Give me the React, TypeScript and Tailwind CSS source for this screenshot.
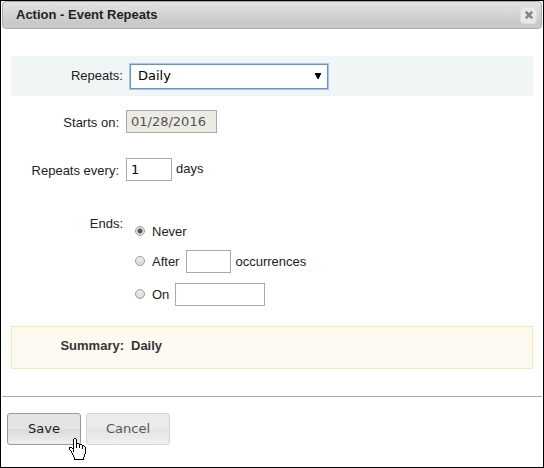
import React, { useState } from "react";

const HAND = [
  "     ##          ",
  "    #..#         ",
  "    #..#         ",
  "    #..#         ",
  "    #..#         ",
  "    #..###       ",
  "    #..#..###    ",
  "    #..#..#..##  ",
  "    #..#..#..#.# ",
  "### #..#..#..#..#",
  "#..##........#..#",
  "#...#...........#",
  " #..#...........#",
  "  #.#...........#",
  "  #.............#",
  "   #............#",
  "   #...........# ",
  "    #..........# ",
  "    #..........# ",
  "     #........#  ",
  "     #........#  ",
  "     ##########  ",
];

function HandCursor() {
  return (
    <svg
      className="pointer-events-none absolute left-[62px] top-[25px] h-[22px] w-[17px]"
      viewBox="0 0 17 22"
      shapeRendering="crispEdges"
      aria-hidden="true"
    >
      {HAND.flatMap((row, y) =>
        row
          .split("")
          .map((c, x) =>
            c === " " ? null : (
              <rect key={`${x}-${y}`} x={x} y={y} width="1" height="1" fill={c === "#" ? "#000" : "#fff"} />
            ),
          ),
      )}
    </svg>
  );
}

const field =
  "h-[23px] border border-[#a9a9a9] bg-white px-1 font-['DejaVu_Sans',sans-serif] text-[13px] text-black outline-none";

const radio =
  "mb-0.5 size-[10px] shrink-0 appearance-none rounded-full border border-[#9a9a9a] bg-linear-to-b from-[#ededed] to-[#d8d8d8] checked:bg-[radial-gradient(circle,#555_0_2px,#e4e4e4_3px)]";

export default function App() {
  const [ends, setEnds] = useState("never");
  const [repeats, setRepeats] = useState("Daily");

  return (
    <div
      role="dialog"
      aria-labelledby="title"
      className="flex min-h-screen flex-col border border-black bg-white font-['Liberation_Sans',Arial,sans-serif] text-[13px] leading-4 text-[#222]"
    >
      <header className="mx-px flex h-7 items-center justify-between rounded border border-[#aaa] bg-linear-to-b from-[#e0e0e0] from-10% to-[#c9c9c9] to-80% pr-1 pl-[13px]">
        <h1 id="title" className="font-bold">
          Action - Event Repeats
        </h1>
        <button
          type="button"
          aria-label="Close"
          className="flex size-[17px] items-center justify-center rounded-sm border border-[#dedede] bg-[#e8e8e8]"
        >
          <svg viewBox="0 0 8 8" className="size-2" stroke="#858585" strokeWidth="2.6" aria-hidden="true">
            <path d="M.8 .8 7.2 7.2M7.2 .8 .8 7.2" />
          </svg>
        </button>
      </header>

      <main className="px-[10px] pt-[27px]">
        <div className="flex h-10 items-center bg-[#f0f6f6]">
          <label htmlFor="repeats" className="w-28 text-right">
            Repeats:
          </label>
          <div className="relative ml-[7px] w-[198px]">
            <select
              id="repeats"
              value={repeats}
              onChange={(e) => setRepeats(e.target.value)}
              className="block h-[25px] w-full appearance-none border border-[#6591d8] bg-white px-[7px] font-['DejaVu_Sans',sans-serif] text-[13px] text-black shadow-[0_0_0_1px_#a6c5f7] outline-none"
            >
              <option>Daily</option>
              <option>Weekly</option>
              <option>Monthly</option>
            </select>
            <svg
              viewBox="0 0 6 6"
              className="pointer-events-none absolute top-[9px] right-[7px] size-[6px]"
              aria-hidden="true"
            >
              <path d="M0 0h6v1L3.5 6h-1L0 1z" />
            </svg>
          </div>
        </div>

        <div className="mt-[14px] flex items-center">
          <label htmlFor="starts" className="mt-0.5 w-[108px] text-right">
            Starts on:
          </label>
          <input
            id="starts"
            disabled
            defaultValue="01/28/2016"
            className="ml-[7px] h-[23px] w-[91px] border border-[#a9a9a9] bg-[#ebebe4] px-1 font-['DejaVu_Sans',sans-serif] text-[13px] text-[#545454]"
          />
        </div>

        <div className="mt-[25px] flex items-center">
          <label htmlFor="every" className="mt-0.5 w-[108px] text-right">
            Repeats every:
          </label>
          <input id="every" defaultValue="1" className={`${field} ml-[7px] w-[46px]`} />
          <span className="mb-0.5 ml-1">days</span>
        </div>

        <fieldset className="mt-[35px] flex" aria-labelledby="ends">
          <span id="ends" className="w-28 text-right">
            Ends:
          </span>
          <div className="ml-3">
            <div className="mt-2 flex h-4 items-center">
              <input
                type="radio"
                id="never"
                name="ends"
                checked={ends === "never"}
                onChange={() => setEnds("never")}
                className={radio}
              />
              <label htmlFor="never" className="ml-[7px]">
                Never
              </label>
            </div>
            <div className="mt-[10px] flex items-center">
              <input
                type="radio"
                id="after"
                name="ends"
                checked={ends === "after"}
                onChange={() => setEnds("after")}
                className={radio}
              />
              <label htmlFor="after" className="ml-[7px]">
                After
              </label>
              <input aria-label="Number of occurrences" className={`${field} ml-[7px] w-[45px]`} />
              <span className="ml-1">occurrences</span>
            </div>
            <div className="mt-[10px] flex items-center">
              <input
                type="radio"
                id="on"
                name="ends"
                checked={ends === "on"}
                onChange={() => setEnds("on")}
                className={radio}
              />
              <label htmlFor="on" className="ml-[7px]">
                On
              </label>
              <input aria-label="End date" className={`${field} ml-[6px] w-[90px]`} />
            </div>
          </div>
        </fieldset>

        <div className="mt-5 flex h-[43px] items-center border border-[#fbec9c] bg-linear-to-b from-[#fefaf1] from-50% to-[#fafaf2] to-50% pb-1 font-bold text-[#363636]">
          <span className="w-28 text-right">Summary:</span>
          <span className="ml-[7px]">{repeats}</span>
        </div>
      </main>

      <footer className="mx-px mt-[27px] flex gap-[5px] border-t border-[#aaa] px-[5px] py-4 font-['DejaVu_Sans',sans-serif]">
        <div className="relative">
          <button
            type="button"
            className="h-8 w-[74px] rounded-[3px] border border-[#999] bg-linear-to-b from-[#e4e4e4] from-50% via-[#dadada] via-50% to-[#f0f0f0] text-[#212121]"
          >
            Save
          </button>
          <HandCursor />
        </div>
        <button
          type="button"
          className="h-8 w-[84px] rounded-[3px] border border-[#d3d3d3] bg-linear-to-b from-[#ebebeb] from-50% via-[#e3e3e3] via-50% to-[#f0f0f0] text-[#555]"
        >
          Cancel
        </button>
      </footer>
    </div>
  );
}
